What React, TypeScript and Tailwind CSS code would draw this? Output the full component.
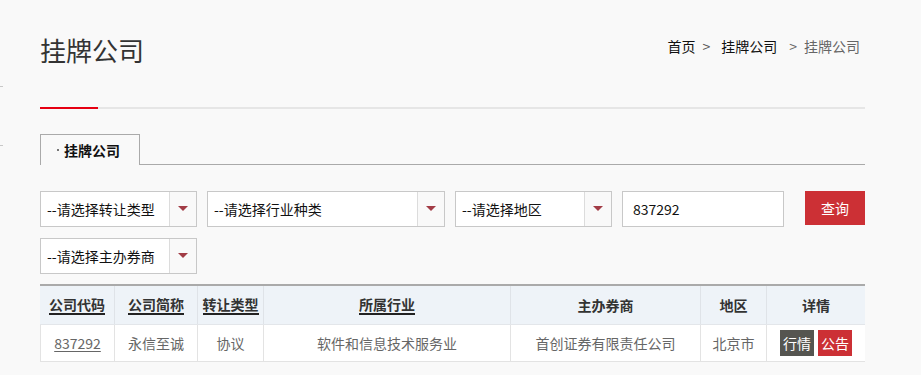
import React from "react";

const font = "font-['Noto_Sans_CJK_SC','Liberation_Sans',sans-serif]";

function Select({ label, width }: { label: string; width: string }) {
  return (
    <div className={`flex h-[36px] ${width} border border-[#c8c8c8] bg-white`}>
      <div className="flex flex-1 items-center pl-[6px] text-[14px] text-[#111]">{label}</div>
      <div className="flex w-[27px] items-center justify-center border-l border-[#dcdcdc] bg-[#f9f9f9]">
        <svg width="10" height="6" viewBox="0 0 10 6">
          <path d="M0 0H10L5 5Z" fill="#a23c46" />
        </svg>
      </div>
    </div>
  );
}

const cols = [
  { title: "公司代码", w: "w-[74px]", link: true },
  { title: "公司简称", w: "w-[83px]", link: true },
  { title: "转让类型", w: "w-[66px]", link: true },
  { title: "所属行业", w: "w-[247px]", link: true },
  { title: "主办券商", w: "w-[190px]", link: false },
  { title: "地区", w: "w-[66px]", link: false },
  { title: "详情", w: "w-[99px]", link: false },
];

export default function App() {
  return (
    <div className={`flex min-h-[375px] w-full bg-[#f9f9f9] ${font}`}>
      <div className="flex w-[40px] flex-col">
        <div className="mt-[86px] h-px w-[3px] bg-[#c8c8c8]" />
        <div className="mt-[58px] h-px w-[3px] bg-[#c8c8c8]" />
      </div>

      <div className="w-[825px]">
        {/* header */}
        <div className="flex items-start justify-between pt-[30px]">
          <h1 className="text-[26px] leading-[40px] text-[#333]">挂牌公司</h1>
          <div className="flex items-center pr-[5px] pt-[6px] text-[14px] leading-[20px]">
            <span className="text-[#111]">首页</span>
            <span className="ml-[7px] mr-[11px] text-[#555]">&gt;</span>
            <span className="text-[#111]">挂牌公司</span>
            <span className="ml-[12px] mr-[7px] text-[#666]">&gt;</span>
            <span className="text-[#666]">挂牌公司</span>
          </div>
        </div>

        <div className="mt-[37px] flex h-[2px]">
          <div className="w-[58px] bg-[#e60012]" />
          <div className="flex-1 bg-[#e6e6e6]" />
        </div>

        {/* tabs */}
        <div className="mt-[25px] flex items-end border-b border-[#aaa]">
          <div className="-mb-px flex h-[31px] w-[100px] items-center border border-b-0 border-[#aaa] bg-[#f9f9f9] pl-[16px]">
            <span className="mr-[5px] h-[2px] w-[2px] bg-[#777]" />
            <span className="text-[14px] font-bold text-[#111]">挂牌公司</span>
          </div>
        </div>

        {/* filters */}
        <div className="mt-[26px] flex flex-wrap items-start gap-x-[10px] gap-y-[11px]">
          <Select label="--请选择转让类型" width="w-[157px]" />
          <Select label="--请选择行业种类" width="w-[238px]" />
          <Select label="--请选择地区" width="w-[157px]" />
          <div className="flex h-[36px] w-[162px] items-center border border-[#c8c8c8] bg-white pl-[10px] text-[14px] text-[#111]">
            837292
          </div>
          <button className="ml-auto h-[34px] w-[60px] bg-[#cc3035] text-[14px] text-white">查询</button>
          <Select label="--请选择主办券商" width="w-[157px]" />
        </div>

        {/* table */}
        <div className="mt-[10px] border-t-2 border-[#aaa]">
          <div className="flex h-[39px] border-b border-[#e3e6ea] bg-[#eef3f8]">
            {cols.map((c, i) => (
              <div
                key={c.title}
                className={`flex ${c.w} items-center justify-center text-[14px] font-bold text-[#333] ${
                  i > 0 ? "border-l border-[#dfe3e8]" : ""
                }`}
              >
                {c.link ? (
                  <span className="border-b-2 border-[#222] leading-[18px]">{c.title}</span>
                ) : (
                  <span>{c.title}</span>
                )}
              </div>
            ))}
          </div>
          <div className="flex h-[37px] border-b border-l border-[#e3e3e3] bg-white text-[14px] text-[#666]">
            <div className="flex w-[73px] items-center justify-center underline underline-offset-2">837292</div>
            <div className="flex w-[83px] items-center justify-center border-l border-[#e3e3e3]">永信至诚</div>
            <div className="flex w-[66px] items-center justify-center border-l border-[#e3e3e3]">协议</div>
            <div className="flex w-[247px] items-center justify-center border-l border-[#e3e3e3]">软件和信息技术服务业</div>
            <div className="flex w-[190px] items-center justify-center border-l border-[#e3e3e3]">首创证券有限责任公司</div>
            <div className="flex w-[66px] items-center justify-center border-l border-[#e3e3e3]">北京市</div>
            <div className="flex w-[99px] items-center justify-center gap-[4px] border-l border-[#e3e3e3]">
              <span className="flex h-[26px] w-[34px] items-center justify-center bg-[#555550] text-white">行情</span>
              <span className="flex h-[26px] w-[34px] items-center justify-center bg-[#cc3035] text-white">公告</span>
            </div>
          </div>
        </div>
      </div>
    </div>
  );
}
